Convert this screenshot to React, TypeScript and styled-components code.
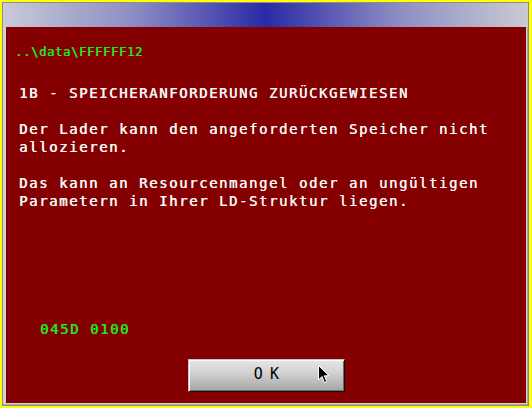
import React from "react";
import styled, { createGlobalStyle } from "styled-components";

const Global = createGlobalStyle`
  html, body {
    margin: 0;
    padding: 0;
    background: #ffff00;
  }
  #root {
    width: 532px;
    height: 408px;
    overflow: hidden;
  }
`;

const Frame = styled.div`
  box-sizing: border-box;
  width: 527px;
  height: 404px;
  margin: 2px 3px 2px 2px;
  border-top: 1px solid #8c8c8c;
  border-left: 1px solid #8c8c8c;
  border-right: 1px solid #8a8a8a;
  border-bottom: 1px solid #8a8a8a;
  background: #d2d2d2;
  box-shadow: inset -1px -1px 0 #a9a9a9;
  display: flex;
  flex-direction: column;
`;

const TitleBand = styled.div`
  height: 24px;
  flex: none;
  background: linear-gradient(
    to right,
    #cacad8 0%,
    #8c8cc4 25%,
    #2a2aa6 50%,
    #8c8cc4 75%,
    #cacad2 100%
  );
`;

const Panel = styled.div`
  flex: 1;
  margin: 0 2px 2px 3px;
  background: #840000;
  display: flex;
  flex-direction: column;
  padding: 17px 0 11px 9px;
  box-sizing: border-box;
  font-family: "DejaVu Sans Mono", "Liberation Mono", monospace;
`;

const Path = styled.div`
  color: #22e222;
  font-size: 12px;
  line-height: 16px;
  letter-spacing: 0.78px;
  white-space: pre;
  text-shadow: 0.4px 0 0 #22e222;
`;

const Text = styled.div<{ $top?: number; $indent?: number; $green?: boolean }>`
  color: ${(p) => (p.$green ? "#22e222" : "#f6f6f6")};
  font-size: 14px;
  line-height: 18px;
  letter-spacing: 1.57px;
  white-space: pre;
  text-shadow: 0.4px 0 0 ${(p) => (p.$green ? "#22e222" : "#f6f6f6")};
  margin-top: ${(p) => (p.$top ?? 0)}px;
  padding-left: ${(p) => (p.$indent ?? 4)}px;
`;

const Message = styled.div`
  display: flex;
  flex-direction: column;
  gap: 18px;
  margin-top: 18px;
`;

const Spacer = styled.div`
  flex: 1;
`;

const ButtonRow = styled.div`
  display: flex;
  justify-content: center;
  margin-top: 21px;
  margin-left: -9px;
`;

const OkButton = styled.div`
  position: relative;
  box-sizing: border-box;
  width: 157px;
  height: 33px;
  border-top: 1px solid #c4c4c4;
  border-left: 1px solid #c4c4c4;
  border-right: 1px solid #111;
  border-bottom: 1px solid #111;
  box-shadow: inset 1px 1px 0 #ffffff, inset -1px -1px 0 #6c6c6c;
  background: linear-gradient(to bottom, #e6e6e6 0%, #d2d2d2 40%, #a6a6a6 100%);
  display: flex;
  align-items: center;
  justify-content: center;
  padding-bottom: 3px;
  color: #000;
  font-family: "DejaVu Sans Mono", "Liberation Mono", monospace;
  font-size: 15px;
  letter-spacing: -0.8px;
  white-space: pre;
`;

const Cursor = styled.svg`
  position: absolute;
  left: 128px;
  top: 4px;
  width: 13px;
  height: 21px;
`;

export default function App() {
  return (
    <>
      <Global />
      <Frame>
        <TitleBand />
        <Panel>
          <Path>..\data\FFFFFF12</Path>
          <Text $top={24}>1B - SPEICHERANFORDERUNG ZURÜCKGEWIESEN</Text>
          <Message>
            <Text>
              {"Der Lader kann den angeforderten Speicher nicht\nallozieren."}
            </Text>
            <Text>
              {"Das kann an Resourcenmangel oder an ungültigen\nParametern in Ihrer LD-Struktur liegen."}
            </Text>
          </Message>
          <Spacer />
          <Text $green $indent={25}>
            045D 0100
          </Text>
          <ButtonRow>
            <OkButton>
              O K
              <Cursor viewBox="0 0 13 21">
                <path
                  d="M1.5 1.5 L1.5 16 L5 12.5 L7.6 18.6 L9.8 17.6 L7.3 11.8 L12 11.8 Z"
                  fill="#000"
                  stroke="#fff"
                  strokeWidth="1"
                  strokeLinejoin="miter"
                />
              </Cursor>
            </OkButton>
          </ButtonRow>
        </Panel>
      </Frame>
    </>
  );
}
